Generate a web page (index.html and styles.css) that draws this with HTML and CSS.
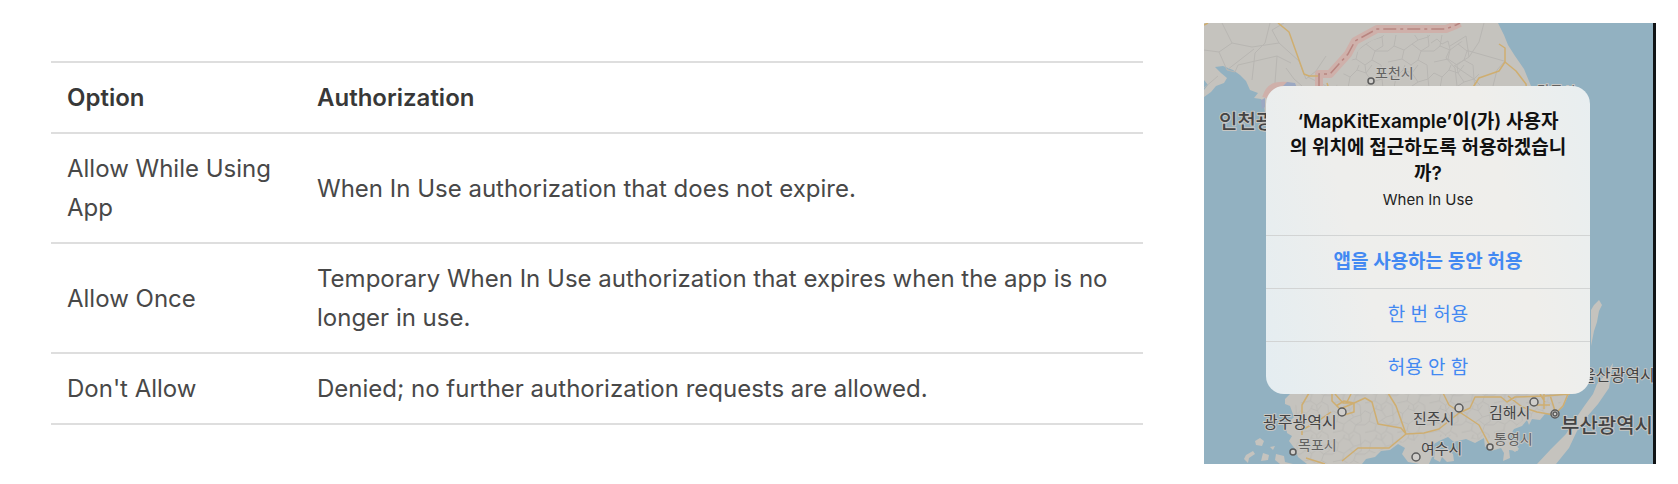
FILE: index.html
```html
<!DOCTYPE html>
<html lang="ko">
<head>
<meta charset="utf-8">
<meta name="viewport" content="width=device-width, initial-scale=1">
<title>Location authorization</title>
<link rel="stylesheet" href="styles.css">
</head>
<body>
<main class="page">
  <table class="options" lang="en">
    <thead>
      <tr><th class="option-col" scope="col">Option</th><th scope="col">Authorization</th></tr>
    </thead>
    <tbody>
      <tr><td>Allow While Using App</td><td>When In Use authorization that does not expire.</td></tr>
      <tr><td>Allow Once</td><td>Temporary When In Use authorization that expires when the app is no longer in use.</td></tr>
      <tr><td>Don't Allow</td><td>Denied; no further authorization requests are allowed.</td></tr>
    </tbody>
  </table>

  <section class="phone">
    <svg class="map" viewBox="0 0 449 441" preserveAspectRatio="xMidYMid slice" role="img" aria-label="지도">
      <defs>
        <pattern id="mesh" width="46" height="42" patternUnits="userSpaceOnUse">
          <path class="district" d="M0 8l8 4 7-7 9 3 6 9 10-3 6-6M8 12l-2 11-6 5M6 23l10 4 8-6 6-4M16 27l-2 9 9 6M24 21l9 7 13 0M33 28l-3 9-7 5M30 37l9 5M15 5l2-5M24 8l6-8M40 14l1 9-8 5M14 36l-14 3M23 0l1 8M39 0l1 14"/>
        </pattern>
      </defs>
      <rect class="sea" width="449" height="441"/>
      <g class="land">
        <path d="M0 0H294L300 12 304 22 311 33 320 46 327 63 330 100H62L60 80 57 76 50 75 54 70 46 67 42 58 36 52 29 47 19 43 11 44 17 50 23 55 20 60 12 63 7 69 0 74V67L4 62 0 57Z"/>
        <path d="M92 360 86 371 81 376 81 381 86 383 90 394 82 402 83 410 88 413 85 418 91 426 94 434 103 441H158L162 436 171 434 177 428 186 427 194 421 201 425 198 431 204 439 216 441H225L229 432 225 424 235 418 244 414 250 419 262 416 271 420 280 415 281 424 288 421 287 428 297 425 300 430 299 438 306 435 305 427 314 428 311 421 304 416 310 406 318 403 323 397 325 402 328 396 336 397 341 391 352 390 359 384 365 371 366 360Z"/>
        <path d="M205 414l7-3 3 6-5 4-5-2zM231 427l7 3 5-4 6 5 1 7-7 1-5-5-2 5-6-3zM51 418l5-3 4 3-2 5-6-1zM42 432l7-4 2 3-6 4-1 5-4-4zM59 430l6 2-1 5-7 1zM72 431l8 2 1 6 8 2h-13l-5-4zM66 424l5-1-2 4zM304 424l8-2 3 4-4 3zM226 406l7 1 2 4-6 1z"/>
        <path d="M387 287l3-5 5-5 3 5-3 6-2 11-3 9-3 15z"/>
        <path d="M409 340l-7 11-9 10-4 10-8 11-9 13-10 16-15 15-14 15h19l13-16 8-17 8-12 13-15 11-16z"/>
      </g>
      <path fill="url(#mesh)" d="M132 63 146 40 158 22 180 12H240L262 20 272 45 280 63Z"/>
      <path fill="url(#mesh)" transform="scale(.7)" d="M142 528 128 550 134 590 130 620 148 629H222L248 612 280 600 345 590 400 596 440 580 460 565 500 558 520 525Z"/>
      <g class="district">
        <path d="M0 27l15 2 13-9L18 0M28 20l20 4 27-4M15 29l8 18 27-21M23 47l8 2 3-7 39-9 14 7M0 65l14-12M66 0l-5 20-10 10-3 27M73 33l-2 27M75 20l20 18 7 18M102 56l10-8 6-9 4-6M75 20L68 7 80 0M104 54l20 10M82 45l8 11 8 7"/>
        <path d="M227 20l6-4 5 5 6-3 2 8-4 9 9 10 2 18M246 23l16-10 3 21-15 9M265 34l10-15 5-19M265 28l35 10M251 43l19 13 6 6M289 63l4-16 8-9"/>
      </g>
      <g class="border-zone">
        <path d="M115 63V51H126L144 31 151 18 173 6H242L252 2 256 0"/>
        <path d="M62 75c4-12 10-13 23-12"/>
      </g>
      <path class="border-line" d="M115 63V51H126L144 31 151 18 173 6H242L252 2 256 0"/>
      <path class="lake" d="M78 64l5-5 8 1 2 5zM57 77l4-2v9l-3 2z"/>
      <g class="road">
        <path d="M0 2l4-2M74 0l11 9 15 42 5 2h9M123 60l2 6M295 21l6 4v14l-6 9-20 7-9 14M301 39l11 9 10 13 1 10"/>
        <path d="M105 370l-7 12v30M128 370v8l8 8 12-5 13-6 7 4 6 22 23 4 5 6-17 14h-31l-16 13M127 389l-10 7-17 10M102 435l19 6M184 370l8 13 10 28 18-1 15-4 20-16 11-5 5-11h26l6 5 8-5 30-1 25-2M131 371l8 9h9M147 371l-4 8M132 383l8-5 10 2v9l-10 3M239 370l6 12 30 20 11 21M304 373l14 11 15 5 17 3 9-9 5-12M346 372l6 19M336 371l5 8M340 370v16M332 382h14"/>
      </g>
      <g class="pin">
        <circle cx="167" cy="58" r="3"/><circle cx="138" cy="389" r="4"/><circle cx="89" cy="429" r="3"/>
        <circle cx="212" cy="434" r="4"/><circle cx="255" cy="385" r="4"/><circle cx="330" cy="379" r="4"/>
        <circle cx="286" cy="424" r="3"/><circle cx="351" cy="391" r="4"/><circle cx="351" cy="391" r="2"/>
      </g>
      <g class="place town"><text x="171" y="55">포천시</text><text x="94" y="427">목포시</text><text x="290" y="421">통영시</text><text x="333" y="73">강릉시</text></g>
      <g class="place city"><text x="209" y="401">진주시</text><text x="217" y="431">여수시</text><text x="285" y="395">김해시</text></g>
      <g class="place metro"><text x="59" y="405">광주광역시</text><text x="377" y="358">울산광역시</text></g>
      <g class="place major"><text x="15" y="106">인천광역시</text><text x="357" y="410">부산광역시</text></g>
    </svg>

    <div class="alert" role="alertdialog" aria-labelledby="alert-title" aria-describedby="alert-message">
      <div class="alert-text">
        <h2 class="alert-title" id="alert-title">‘MapKitExample’이(가) 사용자<br>의 위치에 접근하도록 허용하겠습니<br>까?</h2>
        <p class="alert-message" id="alert-message">When In Use</p>
      </div>
      <button class="alert-button preferred" type="button">앱을 사용하는 동안 허용</button>
      <button class="alert-button" type="button">한 번 허용</button>
      <button class="alert-button" type="button">허용 안 함</button>
    </div>
  </section>
</main>
</body>
</html>
```
FILE: styles.css
```css
* {
  box-sizing: border-box;
}

body {
  margin: 0;
  background: #fff;
  font-family: Inter, "Noto Sans CJK KR", sans-serif;
}

.page {
  display: grid;
  grid-template-columns: 1092fr 452fr;
  gap: 61px;
  align-items: start;
  padding: 23px 22px 20px 51px;
}

.options {
  width: 100%;
  margin-top: 38px;
  border-collapse: collapse;
  color: #484848;
  font-size: 24px;
  line-height: 39px;
}

.options th,
.options td {
  padding: 15px 16px;
  border-top: 2px solid #dedede;
  border-bottom: 2px solid #dedede;
  text-align: left;
  vertical-align: middle;
}

.options th {
  color: #383838;
  font-weight: 600;
}

.option-col {
  width: 250px;
}

.phone {
  display: grid;
  place-items: center;
  aspect-ratio: 452 / 441;
  overflow: hidden;
  border-right: 3px solid #111416;
  background: #92b1c1;
}

.map,
.alert {
  grid-area: 1 / 1;
}

.map {
  display: block;
  width: 100%;
  height: 100%;
}

.sea {
  fill: #92b1c1;
}

.land {
  fill: #c5c3be;
}

.lake {
  fill: #9ba8c2;
}

.district {
  fill: none;
  stroke: #b8b6b2;
  stroke-width: 1;
}

.border-zone {
  fill: none;
  stroke: #cfb0aa;
  stroke-width: 8;
  stroke-linejoin: round;
}

.border-line {
  fill: none;
  stroke: #b88580;
  stroke-width: 1.5;
  stroke-dasharray: 13 4 3 4;
}

.road {
  fill: none;
  stroke: #cfae70;
  stroke-width: 1.5;
  stroke-linejoin: round;
}

.pin {
  fill: #d0cecb;
  stroke: #5b5b5b;
  stroke-width: 1.5;
}

.place {
  fill: #444;
  stroke: #c8c7c4;
  stroke-width: 2;
  stroke-linejoin: round;
  paint-order: stroke;
  font-family: "Noto Sans CJK KR", sans-serif;
}

.town {
  fill: #626160;
  font-size: 14px;
}

.city {
  font-size: 15px;
}

.metro {
  font-size: 16px;
}

.major {
  font-size: 20px;
  font-weight: 500;
}

.alert {
  z-index: 1;
  width: 324px;
  max-width: 100%;
  margin-right: 1px;
  margin-bottom: 8px;
  overflow: hidden;
  border-radius: 18px;
  background: linear-gradient(75deg, #e4edf1 0%, #eeeeec 32%, #efeeeb 72%, #e8eef0 100%);
  text-align: center;
}

.alert-text {
  padding: 23px 16px 22px;
}

.alert-title {
  margin: 0;
  color: #111;
  font-size: 19px;
  font-weight: 600;
  line-height: 26px;
}

.alert-message {
  margin: 0;
  color: #222;
  font-size: 15px;
  line-height: 26px;
}

.alert-button {
  display: block;
  width: 100%;
  padding: 13px 16px;
  border: 0;
  border-top: 1px solid #d2d4d4;
  background: transparent;
  color: #4389f2;
  font-family: inherit;
  font-size: 19px;
  line-height: 26px;
}

.preferred {
  font-weight: 600;
}
```
